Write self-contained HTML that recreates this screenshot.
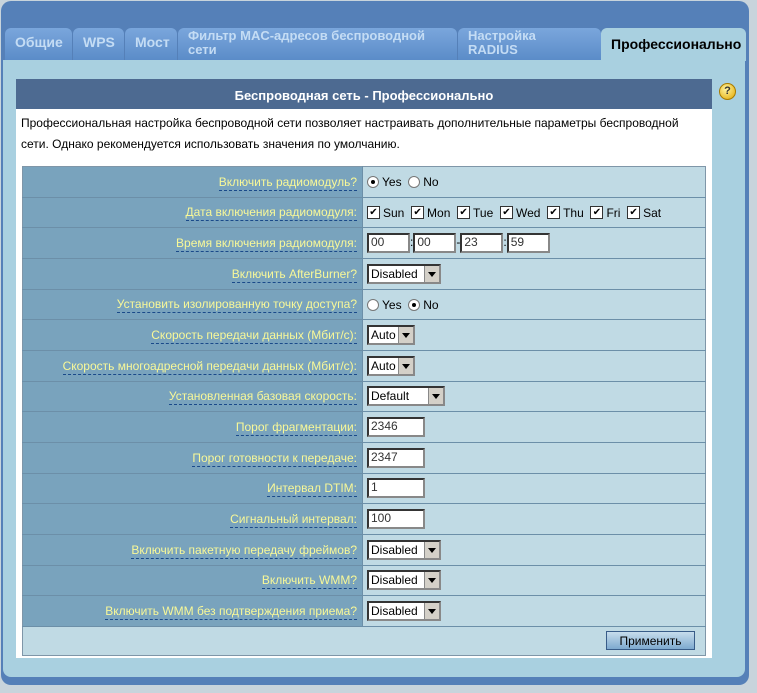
<!DOCTYPE html>
<html><head><meta charset="utf-8"><style>
body{margin:0;width:757px;height:693px;background:#c8d4dc;position:relative;overflow:hidden;font-family:"Liberation Sans",sans-serif;}
.frame{position:absolute;left:1px;top:1px;width:748px;height:684px;background:#5580b8;border-radius:10px;}
.content{position:absolute;left:3px;top:60px;width:742px;height:617px;background:#a9d0e0;border-radius:0 0 8px 8px;}
.tab{position:absolute;top:28px;height:32px;background:linear-gradient(#7aa6dc,#5b8cc8);color:#c4dcf4;font-weight:bold;font-size:14px;border-radius:6px 6px 0 0;box-sizing:border-box;padding:7px 0 0 10px;line-height:14px;}
.tab.two{font-size:13px;padding-top:1px;}
.act{background:#a9d0e0;color:#000;font-size:14px;padding-top:9px;height:33px;}
.panel{position:absolute;left:16px;top:79px;width:696px;height:579px;background:#fff;}
.hdr{height:30px;background:#4d6a91;color:#fff;font-weight:bold;font-size:13px;text-align:center;line-height:34px;}
.desc{font-size:12px;line-height:21px;padding:4px 5px;color:#000;}
table{position:absolute;left:6px;top:87px;width:684px;border-collapse:collapse;border:1px solid #7f96a8;}
td{height:29.67px;border-bottom:1px solid #6c8fa8;padding:0;font-size:12px;}
td.l{width:334px;background:#79a3bd;text-align:right;padding-right:5px;border-right:1px solid #6c8fa8;}
td.l span{color:#f8f898;border-bottom:1px dashed #1a4a8a;padding-bottom:1px;}
td.v{background:#c0dae4;padding-left:4px;color:#000;}
.in{display:inline-block;border:2px inset #888;background:#fff;height:17px;box-sizing:border-box;font-size:12px;line-height:14px;padding-left:2px;color:#333;vertical-align:middle;}
.sel{display:inline-block;border:2px inset #888;background:#fff;height:20px;box-sizing:border-box;font-size:12px;line-height:16px;padding-left:2px;vertical-align:middle;position:relative;}
.sel i{position:absolute;right:0;top:0;width:14px;height:16px;background:#d4d0c8;border-left:1px solid #888;}
.sel i:after{content:"";position:absolute;left:3px;top:6px;border:4px solid transparent;border-top:5px solid #000;}
.cb{display:inline-block;width:11px;height:11px;border:1px solid #333;background:#fff;font-size:10px;line-height:11px;text-align:center;vertical-align:middle;margin-right:3px;}
.rd{display:inline-block;width:10px;height:10px;border:1px solid #777;border-radius:50%;background:#fff;vertical-align:middle;margin-right:3px;position:relative;}
.rd.on:after{content:"";position:absolute;left:3px;top:3px;width:4px;height:4px;border-radius:50%;background:#000;}
.v span.t{vertical-align:middle;}
.btn{position:absolute;right:10px;bottom:5px;width:89px;height:19px;border:1px solid #385c88;background:linear-gradient(#c6dcec,#7ea9cf);font-size:12px;text-align:center;line-height:18px;box-sizing:border-box;}
.help{position:absolute;left:719px;top:83px;width:15px;height:15px;border-radius:50%;background:radial-gradient(circle at 40% 35%,#fff3a0,#e2a800);border:1px solid #a87a00;font-size:11px;font-weight:bold;text-align:center;line-height:15px;color:#333;}
</style></head><body>
<div class="frame"></div>
<div class="tab" style="left:5px;width:67px;">Общие</div>
<div class="tab" style="left:73px;width:51px;">WPS</div>
<div class="tab" style="left:125px;width:52px;">Мост</div>
<div class="tab two" style="left:178px;width:279px;">Фильтр MAC-адресов беспроводной сети</div>
<div class="tab two" style="left:458px;width:143px;">Настройка<br>RADIUS</div>
<div class="content"></div>
<div class="tab act" style="left:601px;width:145px;">Профессионально</div>
<div class="help">?</div>
<div class="panel">
<div class="hdr">Беспроводная сеть - Профессионально</div>
<div class="desc">Профессиональная настройка беспроводной сети позволяет настраивать дополнительные параметры беспроводной сети. Однако рекомендуется использовать значения по умолчанию.</div>
<table>
<tr><td class="l"><span>Включить радиомодуль?</span></td><td class="v"><span class="rd on"></span><span class="t">Yes</span>&nbsp; <span class="rd"></span><span class="t">No</span></td></tr>
<tr><td class="l"><span>Дата включения радиомодуля:</span></td><td class="v"><span class="cb">✔</span><span class="t">Sun</span> &nbsp;<span class="cb">✔</span><span class="t">Mon</span> &nbsp;<span class="cb">✔</span><span class="t">Tue</span> &nbsp;<span class="cb">✔</span><span class="t">Wed</span> &nbsp;<span class="cb">✔</span><span class="t">Thu</span> &nbsp;<span class="cb">✔</span><span class="t">Fri</span> &nbsp;<span class="cb">✔</span><span class="t">Sat</span></td></tr>
<tr><td class="l"><span>Время включения радиомодуля:</span></td><td class="v"><span class="in" style="width:43px;height:20px">00</span>:<span class="in" style="width:43px;height:20px">00</span>-<span class="in" style="width:43px;height:20px">23</span>:<span class="in" style="width:43px;height:20px">59</span></td></tr>
<tr><td class="l"><span>Включить AfterBurner?</span></td><td class="v"><span class="sel" style="width:74px">Disabled<i></i></span></td></tr>
<tr><td class="l"><span>Установить изолированную точку доступа?</span></td><td class="v"><span class="rd"></span><span class="t">Yes</span>&nbsp; <span class="rd on"></span><span class="t">No</span></td></tr>
<tr><td class="l"><span>Скорость передачи данных (Мбит/с):</span></td><td class="v"><span class="sel" style="width:48px">Auto<i></i></span></td></tr>
<tr><td class="l"><span>Скорость многоадресной передачи данных (Мбит/с):</span></td><td class="v"><span class="sel" style="width:48px">Auto<i></i></span></td></tr>
<tr><td class="l"><span>Установленная базовая скорость:</span></td><td class="v"><span class="sel" style="width:78px">Default<i></i></span></td></tr>
<tr><td class="l"><span>Порог фрагментации:</span></td><td class="v"><span class="in" style="width:58px;height:20px">2346</span></td></tr>
<tr><td class="l"><span>Порог готовности к передаче:</span></td><td class="v"><span class="in" style="width:58px;height:20px">2347</span></td></tr>
<tr><td class="l"><span>Интервал DTIM:</span></td><td class="v"><span class="in" style="width:58px;height:20px">1</span></td></tr>
<tr><td class="l"><span>Сигнальный интервал:</span></td><td class="v"><span class="in" style="width:58px;height:20px">100</span></td></tr>
<tr><td class="l"><span>Включить пакетную передачу фреймов?</span></td><td class="v"><span class="sel" style="width:74px">Disabled<i></i></span></td></tr>
<tr><td class="l"><span>Включить WMM?</span></td><td class="v"><span class="sel" style="width:74px">Disabled<i></i></span></td></tr>
<tr><td class="l"><span>Включить WMM без подтверждения приема?</span></td><td class="v"><span class="sel" style="width:74px">Disabled<i></i></span></td></tr>
<tr><td colspan="2" style="background:#c0dae4;height:28px;border-bottom:0;position:relative;"><div class="btn">Применить</div></td></tr>
</table>
</div>
</body></html>
